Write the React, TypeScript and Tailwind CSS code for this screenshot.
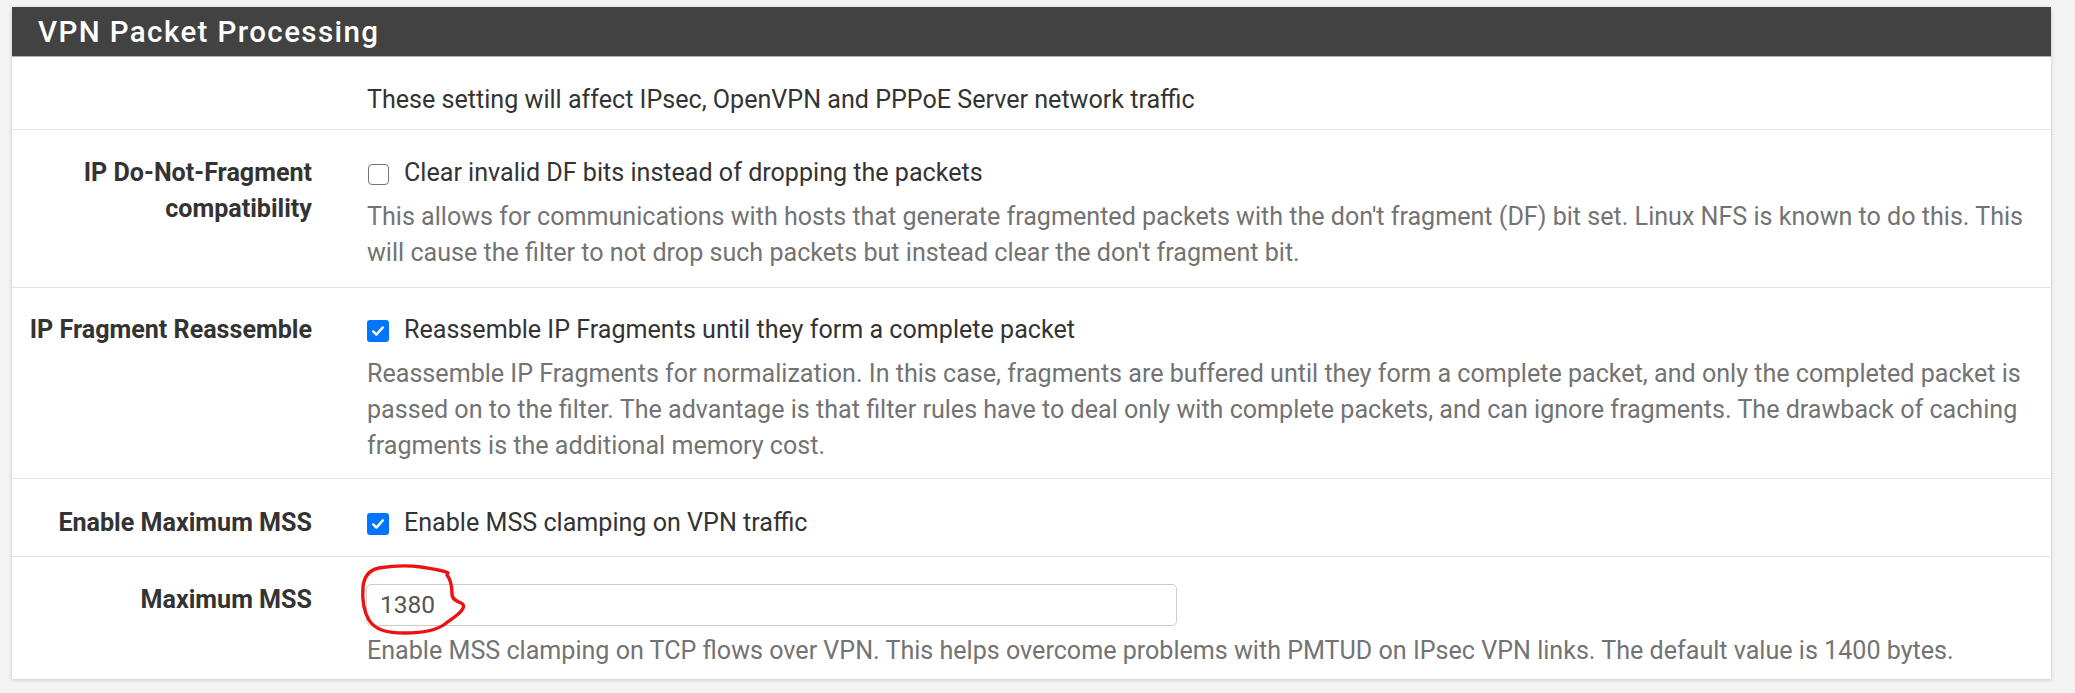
import React from "react";

function Box({ checked }: { checked: boolean }) {
  if (checked) {
    return (
      <span className="mt-[8px] flex h-[22px] w-[22px] shrink-0 items-center justify-center rounded-[3px] bg-[#0075ff]">
        <svg width="16" height="16" viewBox="0 0 16 16">
          <path d="M3.2 8.4 L6.4 11.6 L12.8 4.4" fill="none" stroke="#fff" strokeWidth="2.4" strokeLinecap="round" strokeLinejoin="round" />
        </svg>
      </span>
    );
  }
  return <span className="mt-[9px] ml-[1px] block h-[21px] w-[21px] shrink-0 rounded-[4px] border-[1.5px] border-[#767676] bg-white" />;
}

const help = "mt-[8px] text-[#737373]";

export default function App() {
  return (
    <div className="h-[693px] w-full bg-[#f3f3f3] pt-[7px] pl-[12px] pr-[24px] font-['Roboto',sans-serif] text-[25.1px] leading-[36px] text-[#333]">
      <div className="bg-white shadow-[0_1px_4px_rgba(0,0,0,0.18)]">
        <div className="flex h-[50px] items-center border-b border-[#b0b0b0] bg-[#424242] pl-[26px]">
          <h2 className="text-[29.5px] font-medium tracking-[1.4px] text-white">VPN Packet Processing</h2>
        </div>

        {/* Row 1 */}
        <div className="flex pt-[25px] pb-[11px]">
          <div className="w-[300px] shrink-0" />
          <div className="ml-[55px] flex-1 pr-[16px]">These setting will affect IPsec, OpenVPN and PPPoE Server network traffic</div>
        </div>

        {/* Row 2 */}
        <div className="flex border-t border-[#e3e3e3] pt-[25px] pb-[16px]">
          <div className="w-[300px] shrink-0 text-right font-bold">IP Do-Not-Fragment compatibility</div>
          <div className="ml-[55px] flex-1 pr-[16px]">
            <div className="flex gap-[15px]">
              <Box checked={false} />
              <span>Clear invalid DF bits instead of dropping the packets</span>
            </div>
            <div className={help}>
              This allows for communications with hosts that generate fragmented packets with the don't fragment (DF) bit set. Linux NFS is known to do this. This will cause the filter to not drop such packets but instead clear the don't fragment bit.
            </div>
          </div>
        </div>

        {/* Row 3 */}
        <div className="flex border-t border-[#e3e3e3] pt-[24px] pb-[14px]">
          <div className="w-[300px] shrink-0 text-right font-bold">IP Fragment Reassemble</div>
          <div className="ml-[55px] flex-1 pr-[16px]">
            <div className="flex gap-[15px]">
              <Box checked={true} />
              <span>Reassemble IP Fragments until they form a complete packet</span>
            </div>
            <div className={help}>
              Reassemble IP Fragments for normalization. In this case, fragments are buffered until they form a complete packet, and only the completed packet is passed on to the filter. The advantage is that filter rules have to deal only with complete packets, and can ignore fragments. The drawback of caching fragments is the additional memory cost.
            </div>
          </div>
        </div>

        {/* Row 4 */}
        <div className="flex border-t border-[#e3e3e3] pt-[26px] pb-[15px]">
          <div className="w-[300px] shrink-0 text-right font-bold">Enable Maximum MSS</div>
          <div className="ml-[55px] flex-1 pr-[16px]">
            <div className="flex gap-[15px]">
              <Box checked={true} />
              <span>Enable MSS clamping on VPN traffic</span>
            </div>
          </div>
        </div>

        {/* Row 5 */}
        <div className="flex border-t border-[#e3e3e3] pb-[10px]">
          <div className="w-[300px] shrink-0 pt-[25px] text-right font-bold">Maximum MSS</div>
          <div className="relative ml-[55px] flex-1 pt-[27px] pr-[16px]">
            <div className="-ml-[1px] flex h-[42px] w-[811px] items-center rounded-[5px] border border-[#cccccc] bg-white pl-[13px] text-[24.5px] text-[#555]">
              1380
            </div>
            <div className="mt-[7px] text-[#737373]">
              Enable MSS clamping on TCP flows over VPN. This helps overcome problems with PMTUD on IPsec VPN links. The default value is 1400 bytes.
            </div>
            <svg className="pointer-events-none absolute left-[-12px] top-[3px]" width="120" height="80" viewBox="0 0 120 80">
              <path
                d="M92 15 C96 20 97 28 97 34 C97 39 101 41 106 43 C111 45 108 50 102 55 C97 59 94 61 90 64 C82 70 70 73 50 73 C32 73 20 70 14 60 C8 50 7 40 8 27 C9 17 14 10 24 8 C36 6 52 5 66 7 C78 9 88 10 93 13"
                fill="none"
                stroke="#ee1111"
                strokeWidth="3.4"
                strokeLinecap="round"
                strokeLinejoin="round"
              />
            </svg>
          </div>
        </div>
      </div>
    </div>
  );
}
